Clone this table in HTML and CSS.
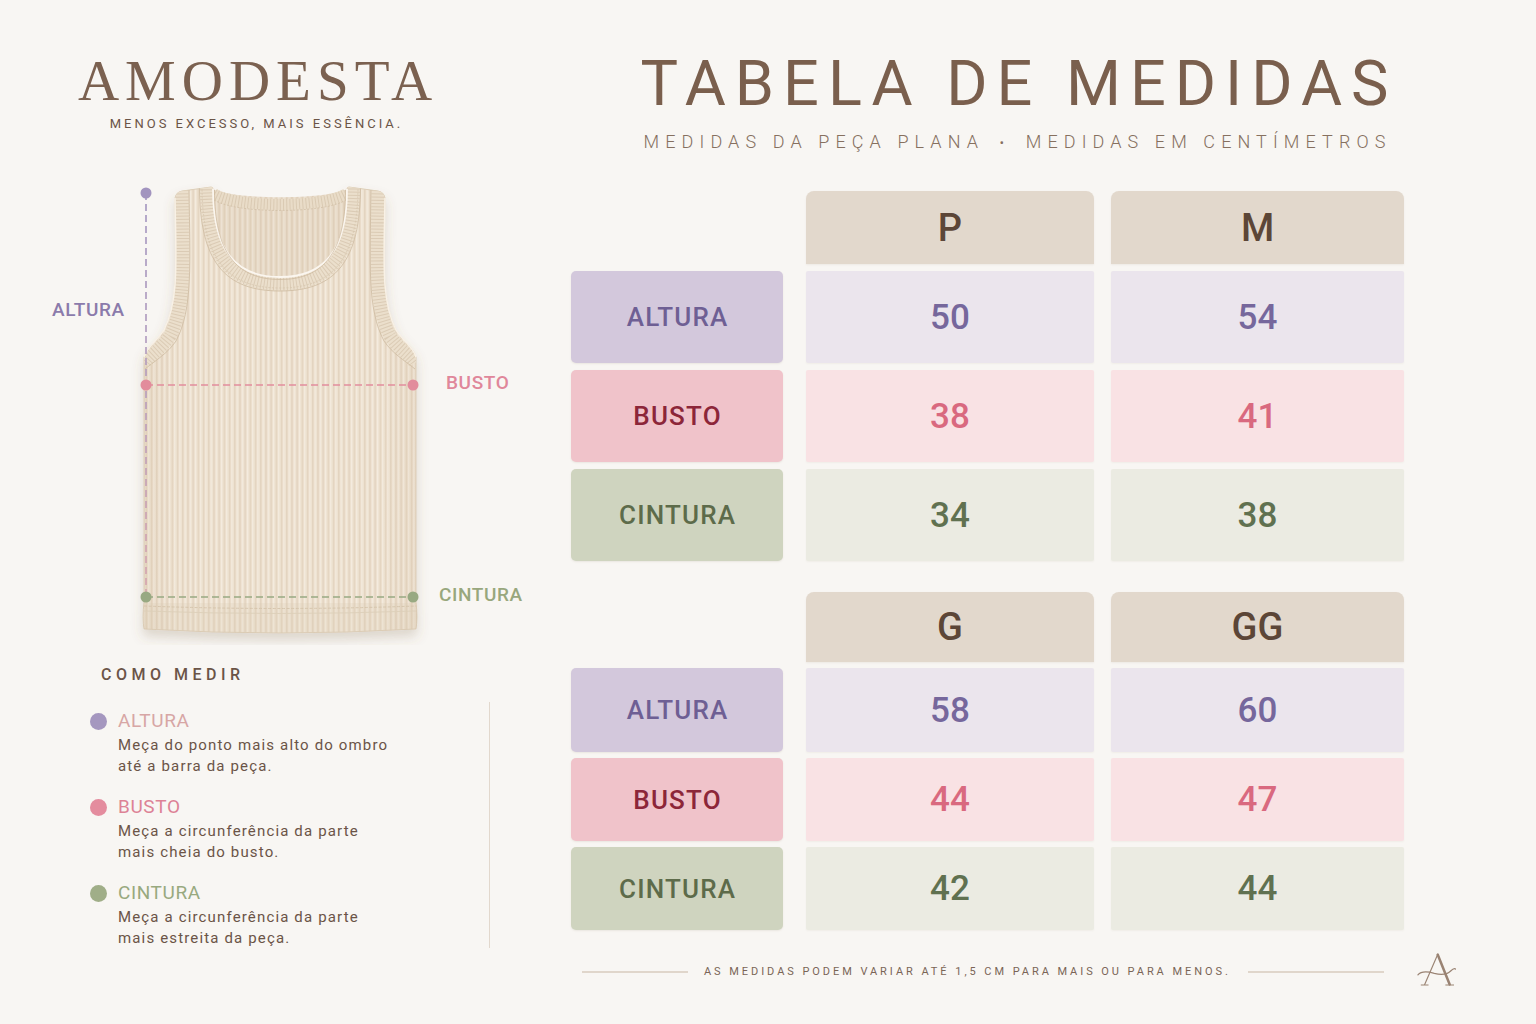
FILE: index.html
```html
<!DOCTYPE html>
<html lang="pt-BR">
<head>
<meta charset="utf-8">
<title>Tabela de Medidas – Amodesta</title>
<link rel="stylesheet" href="styles.css">
</head>
<body>
<div class="page">
  <aside class="left">
    <header class="brand">
      <div class="brand-name">AMODESTA</div>
      <div class="brand-tag">MENOS EXCESSO, MAIS ESSÊNCIA.</div>
    </header>

    <div class="figure">
      <svg class="garment" width="540" height="470" viewBox="0 175 540 470" aria-hidden="true">
        <defs>
          <pattern id="rib" width="5.2" height="10" patternUnits="userSpaceOnUse">
            <rect width="5.2" height="10" fill="#eee2d1"/>
            <rect x="0" width="1.5" height="10" fill="#e3d4c0"/>
            <rect x="2.7" width="1" height="10" fill="#f5ede1"/>
          </pattern>
          <filter id="shadow" x="-15%" y="-10%" width="130%" height="130%">
            <feDropShadow dx="0" dy="7" stdDeviation="6" flood-color="#7a6045" flood-opacity="0.22"/>
          </filter>
          <linearGradient id="altGrad" x1="0" y1="193" x2="0" y2="597" gradientUnits="userSpaceOnUse">
            <stop offset="0" stop-color="#a295bf"/>
            <stop offset="0.45" stop-color="#b39bbd"/>
            <stop offset="1" stop-color="#d6a3ad"/>
          </linearGradient>
          <linearGradient id="sideShade" x1="144" y1="0" x2="416" y2="0" gradientUnits="userSpaceOnUse">
            <stop offset="0" stop-color="#c9b092" stop-opacity="0.14"/>
            <stop offset="0.12" stop-color="#c9b092" stop-opacity="0"/>
            <stop offset="0.88" stop-color="#c9b092" stop-opacity="0"/>
            <stop offset="1" stop-color="#c9b092" stop-opacity="0.14"/>
          </linearGradient>
          <clipPath id="bodyClip">
            <path d="M175,198 Q176,192 182,191 L211,187 Q213,187 213,189 C213,250 235,277 280,277 C325,277 347,250 347,189 Q347,187 349,187 L378,191 Q384,192 385,198 C384,262 381,300 396,330 C405,343 414,348 416,357 L416,602 Q418,618 416,629 Q280,637 144,629 Q142,618 144,602 L144,357 C146,348 155,343 164,330 C179,300 176,262 175,198 Z"/>
          </clipPath>
        </defs>

        <g filter="url(#shadow)">
          <path d="M175,198 Q176,192 182,191 L211,187 Q213,187 213,189 C213,250 235,277 280,277 C325,277 347,250 347,189 Q347,187 349,187 L378,191 Q384,192 385,198 C384,262 381,300 396,330 C405,343 414,348 416,357 L416,602 Q418,618 416,629 Q280,637 144,629 Q142,618 144,602 L144,357 C146,348 155,343 164,330 C179,300 176,262 175,198 Z" fill="url(#rib)" stroke="#dccdb7" stroke-width="1"/>
        </g>

        <!-- interior seen through the neck -->
        <path d="M213,189 C213,250 235,277 280,277 C325,277 347,250 347,189 C325,200 235,200 213,189 Z" fill="url(#rib)"/>
        <path d="M213,189 C213,250 235,277 280,277 C325,277 347,250 347,189 C325,200 235,200 213,189 Z" fill="#c4aa8c" opacity="0.13"/>
        <path d="M214,194 C236,208 324,208 346,194" fill="none" stroke="#e9dcc8" stroke-width="11"/>
        <path d="M214,194 C236,208 324,208 346,194" fill="none" stroke="#dacab3" stroke-width="11" stroke-dasharray="1 2.2"/>
        <path d="M214,200 C236,214 324,214 346,200" fill="none" stroke="#d2c0a7" stroke-width="0.8" stroke-dasharray="2 1.5"/>

        <g clip-path="url(#bodyClip)">
          <rect x="140" y="180" width="280" height="460" fill="url(#sideShade)"/>
          <!-- neck band -->
          <path d="M206.5,186 C206.5,256 230,284 280,284 C330,284 353.5,256 353.5,186" fill="none" stroke="#ebdfcc" stroke-width="13"/>
          <path d="M206.5,186 C206.5,256 230,284 280,284 C330,284 353.5,256 353.5,186" fill="none" stroke="#dbcbb5" stroke-width="13" stroke-dasharray="1 2.2"/>
          <path d="M199.5,186 C199.5,262 225,291 280,291 C335,291 360.5,262 360.5,186" fill="none" stroke="#d0bea5" stroke-width="0.9"/>
          <path d="M202,186 C202,259 227,288 280,288 C333,288 358,259 358,186" fill="none" stroke="#d6c5ad" stroke-width="0.7" stroke-dasharray="2 1.5"/>
          <!-- armhole bands -->
          <path d="M182,190 C183,262 186,304 170,336 C161,349 151,354 145,363" fill="none" stroke="#ebdfcc" stroke-width="13"/>
          <path d="M182,190 C183,262 186,304 170,336 C161,349 151,354 145,363" fill="none" stroke="#dbcbb5" stroke-width="13" stroke-dasharray="1 2.2"/>
          <path d="M378,190 C377,262 374,304 390,336 C399,349 409,354 415,363" fill="none" stroke="#ebdfcc" stroke-width="13"/>
          <path d="M378,190 C377,262 374,304 390,336 C399,349 409,354 415,363" fill="none" stroke="#dbcbb5" stroke-width="13" stroke-dasharray="1 2.2"/>
          <path d="M189,190 C190,264 193,309 176,341 C167,354 156,360 145,369" fill="none" stroke="#d0bea5" stroke-width="0.9"/>
          <path d="M371,190 C370,264 367,309 384,341 C393,354 404,360 415,369" fill="none" stroke="#d0bea5" stroke-width="0.9"/>
          <!-- hem -->
          <rect x="140" y="603" width="280" height="40" fill="#d8c7ae" opacity="0.2"/>
          <path d="M144,606 Q280,611 416,606" fill="none" stroke="#d4c3aa" stroke-width="0.9" stroke-dasharray="3 1.6"/>
          <path d="M144,611 Q280,616 416,611" fill="none" stroke="#ddcfb9" stroke-width="0.9"/>
        </g>

        <!-- piping on the edges -->
        <path d="M213,189 C213,250 235,277 280,277 C325,277 347,250 347,189" fill="none" stroke="#fbf6ef" stroke-width="1.8"/>
        <path d="M214.5,190 C214.5,252 236,279.5 280,279.5 C324,279.5 345.5,252 345.5,190" fill="none" stroke="#cbb79c" stroke-width="0.7"/>
        <path d="M175,198 C176,262 179,300 164,330 C155,343 146,348 144,357" fill="none" stroke="#f8f1e6" stroke-width="1.5"/>
        <path d="M385,198 C384,262 381,300 396,330 C405,343 414,348 416,357" fill="none" stroke="#f8f1e6" stroke-width="1.5"/>

        <!-- measurement lines -->
        <line x1="146" y1="193" x2="146" y2="597" stroke="url(#altGrad)" stroke-width="1.6" stroke-dasharray="7 4"/>
        <line x1="146" y1="385" x2="413" y2="385" stroke="#e28d9d" stroke-width="1.6" stroke-dasharray="7 4"/>
        <line x1="146" y1="597" x2="413" y2="597" stroke="#98a982" stroke-width="1.6" stroke-dasharray="7 4"/>
        <circle cx="146" cy="193" r="5.5" fill="#a294bf"/>
        <circle cx="146" cy="385" r="5.5" fill="#e28c9c"/>
        <circle cx="413" cy="385" r="5.5" fill="#e28c9c"/>
        <circle cx="146" cy="597" r="5.5" fill="#98a982"/>
        <circle cx="413" cy="597" r="5.5" fill="#98a982"/>
      </svg>
      <span class="fig-label fl-altura">ALTURA</span>
      <span class="fig-label fl-busto">BUSTO</span>
      <span class="fig-label fl-cintura">CINTURA</span>
    </div>

    <h2 class="howto-title">COMO MEDIR</h2>
    <ul class="legend">
      <li class="legend-item li-altura">
        <span class="dot"></span>
        <span class="legend-title">ALTURA</span>
        <p class="legend-desc">Meça do ponto mais alto do ombro<br>até a barra da peça.</p>
      </li>
      <li class="legend-item li-busto">
        <span class="dot"></span>
        <span class="legend-title">BUSTO</span>
        <p class="legend-desc">Meça a circunferência da parte<br>mais cheia do busto.</p>
      </li>
      <li class="legend-item li-cintura">
        <span class="dot"></span>
        <span class="legend-title">CINTURA</span>
        <p class="legend-desc">Meça a circunferência da parte<br>mais estreita da peça.</p>
      </li>
    </ul>
  </aside>

  <main class="right">
    <h1 class="title">TABELA DE MEDIDAS</h1>
    <p class="subtitle">MEDIDAS DA PEÇA PLANA <span class="sep">•</span> MEDIDAS EM CENTÍMETROS</p>

    <div class="size-table t1">
      <div class="corner"></div>
      <div class="head">P</div>
      <div class="head">M</div>
      <div class="label altura">ALTURA</div>
      <div class="val altura">50</div>
      <div class="val altura">54</div>
      <div class="label busto">BUSTO</div>
      <div class="val busto">38</div>
      <div class="val busto">41</div>
      <div class="label cintura">CINTURA</div>
      <div class="val cintura">34</div>
      <div class="val cintura">38</div>
    </div>

    <div class="size-table t2">
      <div class="corner"></div>
      <div class="head">G</div>
      <div class="head">GG</div>
      <div class="label altura">ALTURA</div>
      <div class="val altura">58</div>
      <div class="val altura">60</div>
      <div class="label busto">BUSTO</div>
      <div class="val busto">44</div>
      <div class="val busto">47</div>
      <div class="label cintura">CINTURA</div>
      <div class="val cintura">42</div>
      <div class="val cintura">44</div>
    </div>

    <footer class="footer">
      <span class="footer-line fl1"></span>
      <span class="footer-text">AS MEDIDAS PODEM VARIAR ATÉ 1,5 CM PARA MAIS OU PARA MENOS.</span>
      <span class="footer-line fl2"></span>
      <svg class="monogram" width="44" height="36" viewBox="0 0 44 36" aria-hidden="true">
        <path d="M9,33 L22.5,2" fill="none" stroke="#9a8373" stroke-width="1.2" stroke-linecap="round"/>
        <path d="M22.5,2 L35,33" fill="none" stroke="#9a8373" stroke-width="2.6" stroke-linecap="round"/>
        <path d="M5,33.5 L13,33.5 M30.5,33.5 L39.5,33.5" fill="none" stroke="#9a8373" stroke-width="1.1"/>
        <path d="M2,23 C6,18.5 12,19.5 19,21.5 C27,23.5 33,22 36,19 C38,17 40,16 41,17" fill="none" stroke="#9a8373" stroke-width="1.3" stroke-linecap="round"/>
      </svg>
    </footer>
  </main>
</div>
</body>
</html>
```

FILE: styles.css
```css
* { box-sizing: border-box; }

html, body {
  margin: 0;
  padding: 0;
}

body {
  width: 1536px;
  height: 1024px;
  overflow: hidden;
  background: #f8f6f3;
  font-family: Roboto, "Open Sans", Arial, sans-serif;
  color: #6b5447;
}

.page {
  display: flex;
  height: 1024px;
}

/* ---------- LEFT COLUMN ---------- */
.left {
  width: 540px;
  flex: none;
  display: flex;
  flex-direction: column;
}

.brand {
  width: 510px;
  margin-top: 52px;
  text-align: center;
}

.brand-name {
  font-family: "Liberation Serif", "Times New Roman", serif;
  font-size: 57px;
  line-height: 57px;
  letter-spacing: 6px;
  padding-left: 6px;
  color: #7b6150;
}

.brand-tag {
  margin-top: 7px;
  font-size: 13px;
  line-height: 16px;
  letter-spacing: 3px;
  padding-left: 3px;
  color: #6b5447;
}

.figure {
  position: relative;
  width: 540px;
  height: 470px;
  margin-top: 43px;
}

.garment {
  display: block;
}

.fig-label {
  position: absolute;
  font-size: 19px;
  line-height: 20px;
  font-weight: 500;
  letter-spacing: 0.6px;
}
.fl-altura  { left: 52px;  top: 125px; color: #8b7bab; }
.fl-busto   { left: 446px; top: 198px; color: #e0879a; }
.fl-cintura { left: 439px; top: 410px; color: #98a77d; }

.howto-title {
  margin: 20px 0 0 101px;
  font-size: 16px;
  line-height: 20px;
  font-weight: 500;
  letter-spacing: 4.5px;
  color: #6b5447;
}

.legend {
  list-style: none;
  margin: 17px 0 0 90px;
  padding: 8px 0 0 0;
  width: 400px;
  height: 246px;
  border-right: 1.5px solid #e2d8cd;
  display: flex;
  flex-direction: column;
  gap: 19px;
}

.legend-item {
  display: grid;
  grid-template-columns: 17px 1fr;
  column-gap: 11px;
  align-items: center;
}

.dot {
  width: 17px;
  height: 17px;
  border-radius: 50%;
}

.legend-title {
  font-size: 19px;
  line-height: 22px;
  font-weight: 400;
  letter-spacing: 0.6px;
}

.legend-desc {
  grid-column: 2;
  margin: 3px 0 0 0;
  font-size: 15px;
  line-height: 21px;
  letter-spacing: 1.15px;
  color: #6b5447;
}

.li-altura .dot { background: #a597bf; }
.li-altura .legend-title { color: #d7a6a5; }
.li-busto .dot { background: #e48c9e; }
.li-busto .legend-title { color: #dd8296; }
.li-cintura .dot { background: #a0ae88; }
.li-cintura .legend-title { color: #98a97f; }

/* ---------- RIGHT COLUMN ---------- */
.right {
  flex: none;
  width: 918px;
  padding-left: 31px;
  display: flex;
  flex-direction: column;
}

.title {
  width: 887px;
  margin: 52px 0 0 0;
  text-align: center;
  font-size: 63px;
  line-height: 63px;
  font-weight: 400;
  letter-spacing: 9px;
  padding-left: 9px;
  color: #7a5f4d;
}

.subtitle {
  width: 887px;
  margin: 18px 0 0 0;
  text-align: center;
  font-size: 18px;
  line-height: 18px;
  font-weight: 300;
  letter-spacing: 6.1px;
  padding-left: 6.1px;
  color: #86705f;
}

.sep {
  display: inline-block;
  margin: 0 5px;
  font-size: 14px;
}

.size-table {
  display: grid;
  grid-template-columns: 218px 288px 293px;
  column-gap: 17px;
}

.t1 {
  margin-top: 39px;
  grid-template-rows: 73px 92px 92px 92px;
  row-gap: 7px;
}

.t2 {
  margin-top: 31px;
  grid-template-rows: 70px 84px 83px 83px;
  row-gap: 6px;
}

.head, .label, .val {
  display: flex;
  align-items: center;
  justify-content: center;
}

.head {
  background: #e2d8cc;
  border-radius: 8px 8px 0 0;
  font-size: 38px;
  font-weight: 500;
  color: #5c4637;
  box-shadow: 0 1px 2px rgba(120, 95, 70, 0.08);
}

.label {
  width: 212px;
  border-radius: 5px;
  font-size: 26px;
  font-weight: 500;
  letter-spacing: 1.2px;
  padding-left: 1.2px;
  box-shadow: 0 1px 2px rgba(120, 95, 70, 0.1);
}

.val {
  border-radius: 2px;
  font-size: 35px;
  font-weight: 500;
  box-shadow: 0 1px 2px rgba(120, 95, 70, 0.06);
}

.label.altura  { background: #d3c8dc; color: #6e5f94; }
.label.busto   { background: #f0c3ca; color: #8c2639; }
.label.cintura { background: #cfd4bf; color: #5d6b4a; }

.val.altura  { background: #ebe5ed; color: #76679c; }
.val.busto   { background: #f9e2e4; color: #d9697f; }
.val.cintura { background: #ebebe2; color: #607150; }

.footer {
  display: flex;
  align-items: center;
  height: 40px;
  margin-top: 22px;
  margin-left: 11px;
}

.footer-line {
  height: 1.5px;
  background: #e0d6cb;
}
.fl1 { width: 110px; margin-right: 16px; }
.fl2 { width: 141px; margin-left: 17px; }

.footer-text {
  font-size: 11px;
  line-height: 14px;
  letter-spacing: 2.95px;
  color: #7a6556;
  white-space: nowrap;
}

.monogram {
  align-self: flex-start;
  margin-left: 32px;
  display: block;
}
```
